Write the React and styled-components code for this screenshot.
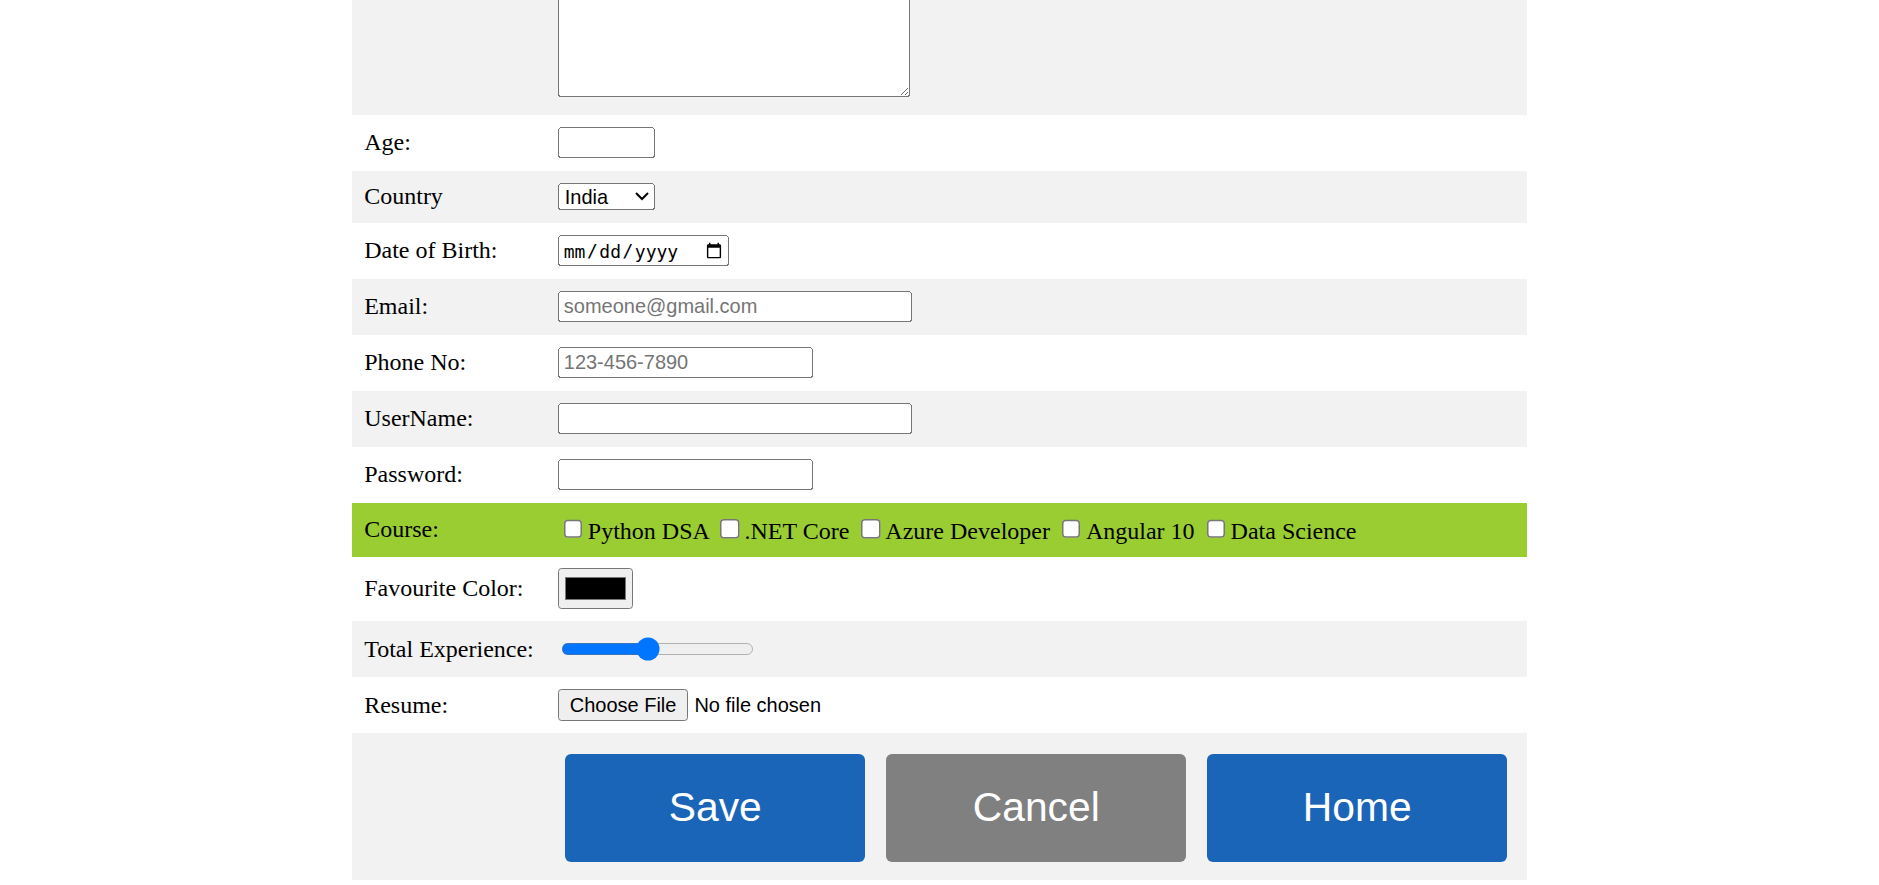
import React from "react"
import styled, { createGlobalStyle } from "styled-components"

const GlobalStyle = createGlobalStyle`
  html, body {
    margin: 0;
    padding: 0;
    background: #ffffff;
  }
  body {
    font-family: "Liberation Serif", "Times New Roman", serif;
    font-size: 16px;
    color: #000;
  }
`

// the reference was taken at 150% browser zoom
const Page = styled.div`
  zoom: 1.5;
`

const FormTable = styled.table`
  margin: 0 auto;
  border-collapse: collapse;
`

const tones = {
  grey: "#f2f2f2",
  white: "#ffffff",
  green: "#9acd32",
}

const Row = styled.tr`
  background: ${(p) => tones[p.$tone]};
  height: ${(p) => p.$h}px;
`

const Label = styled.td`
  padding: 0 8px;
  vertical-align: middle;
  white-space: nowrap;
`

const Field = styled.td`
  padding: ${(p) => (p.$bottom ? "0 8px 12px" : "0 8px")};
  vertical-align: middle;
  white-space: nowrap;
`

const Clip = styled.div`
  height: 64.5px;
  overflow: hidden;
  display: flex;
  align-items: flex-end;
`

const TextArea = styled.textarea`
  box-sizing: border-box;
  width: 235px;
  height: 120px;
  margin: 0;
  font-family: "Liberation Mono", monospace;
  font-size: 13.333px;
`

const TextInput = styled.input`
  box-sizing: border-box;
  width: ${(p) => p.$w}px;
  height: 21px;
  margin: 0;
  font-family: "Liberation Sans", Arial, sans-serif;
  font-size: 13.333px;
  &::placeholder {
    color: #757575;
  }
`

const DateInput = styled.input`
  box-sizing: border-box;
  width: 114px;
  height: 21px;
  margin: 0;
  font-family: "DejaVu Sans Mono", "Liberation Mono", monospace;
  font-size: 12px;
`

const Select = styled.select`
  box-sizing: border-box;
  width: 65px;
  height: 18px;
  margin: 0;
  font-family: "Liberation Sans", Arial, sans-serif;
  font-size: 13.333px;
`

const Check = styled.input`
  margin: 3px 3px 3px 4px;
`

const ColorInput = styled.input`
  box-sizing: border-box;
  width: 50px;
  height: 27px;
  margin: 0;
`

const Range = styled.input`
  width: 129px;
  margin: 2px;
  vertical-align: middle;
`

const FileInput = styled.input`
  margin: 0;
  font-family: "Liberation Sans", Arial, sans-serif;
  font-size: 13.333px;
`

const ActionButton = styled.button`
  width: 200px;
  height: 72px;
  margin: 6px 5px 4px;
  border: none;
  border-radius: 4px;
  background: ${(p) => (p.$muted ? "#808080" : "#1b65b9")};
  color: #ffffff;
  font-family: "Liberation Sans", Arial, sans-serif;
  font-size: 27.2px;
  vertical-align: middle;
  cursor: pointer;
`

const courses = ["Python DSA", ".NET Core", "Azure Developer", "Angular 10", "Data Science"]

export default function App() {
  return (
    <>
      <GlobalStyle />
      <Page>
        <FormTable>
          <tbody>
            <Row $tone="grey">
              <Label></Label>
              <Field $bottom>
                <Clip>
                  <TextArea />
                </Clip>
              </Field>
            </Row>
            <Row $tone="white" $h={37.33}>
              <Label>Age:</Label>
              <Field>
                <TextInput type="text" $w={64.5} />
              </Field>
            </Row>
            <Row $tone="grey" $h={34.67}>
              <Label>Country</Label>
              <Field>
                <Select defaultValue="India">
                  <option>India</option>
                  <option>USA</option>
                  <option>UK</option>
                </Select>
              </Field>
            </Row>
            <Row $tone="white" $h={37.33}>
              <Label>Date of Birth:</Label>
              <Field>
                <DateInput type="date" />
              </Field>
            </Row>
            <Row $tone="grey" $h={37.33}>
              <Label>Email:</Label>
              <Field>
                <TextInput type="email" placeholder="someone@gmail.com" $w={236} />
              </Field>
            </Row>
            <Row $tone="white" $h={37.33}>
              <Label>Phone No:</Label>
              <Field>
                <TextInput type="tel" placeholder="123-456-7890" $w={170} />
              </Field>
            </Row>
            <Row $tone="grey" $h={37.33}>
              <Label>UserName:</Label>
              <Field>
                <TextInput type="text" $w={236} />
              </Field>
            </Row>
            <Row $tone="white" $h={37.33}>
              <Label>Password:</Label>
              <Field>
                <TextInput type="password" $w={170} />
              </Field>
            </Row>
            <Row $tone="green" $h={36}>
              <Label>Course:</Label>
              <Field>
                {courses.map((c) => (
                  <React.Fragment key={c}>
                    <Check type="checkbox" />
                    {c}{" "}
                  </React.Fragment>
                ))}
              </Field>
            </Row>
            <Row $tone="white" $h={42.67}>
              <Label>Favourite Color:</Label>
              <Field>
                <ColorInput type="color" defaultValue="#000000" />
              </Field>
            </Row>
            <Row $tone="grey" $h={37.8}>
              <Label>Total Experience:</Label>
              <Field>
                <Range type="range" min="1" max="10" defaultValue="5" />
              </Field>
            </Row>
            <Row $tone="white" $h={37}>
              <Label>Resume:</Label>
              <Field>
                <FileInput type="file" />
              </Field>
            </Row>
            <Row $tone="grey" $h={98}>
              <Label></Label>
              <Field>
                <ActionButton type="submit">Save</ActionButton>{" "}
                <ActionButton type="button" $muted>Cancel</ActionButton>{" "}
                <ActionButton type="button">Home</ActionButton>
              </Field>
            </Row>
          </tbody>
        </FormTable>
      </Page>
    </>
  )
}
